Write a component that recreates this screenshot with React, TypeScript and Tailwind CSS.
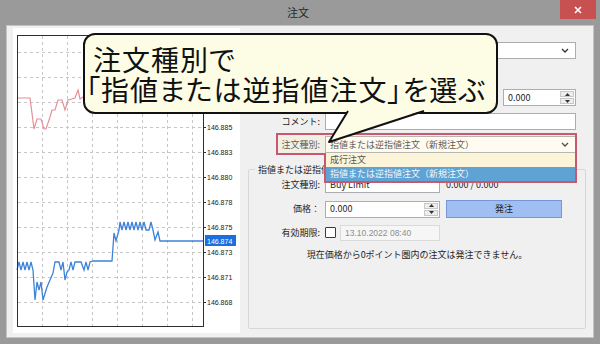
import React from "react";

const redLine =
  "4,70 17,70 21,101 24,91 28,91 31,101 33,101 37,89 39,82 42,82 45,72 49,72 52,82 55,72 59,71 62,70 65,62 67,71 73,67";

const blueLine =
  "4,242 6,234 8,242 10,234 12,242 14,234 16,242 18,234 20,242 22,272 24,254 26,262 28,254 30,272 34,259 37,252 40,245 42,234 46,234 48,242 50,234 52,252 54,244 56,242 58,234 60,242 62,234 64,234 68,234 71,242 73,234 75,242 77,234 80,233 99,233 101,205 103,213 106,202 107,194 109,202 111,194 113,202 115,194 117,202 119,194 121,202 123,194 125,202 127,194 129,202 131,194 133,202 136,202 138,194 140,202 142,212 145,204 147,213 190,213";

const gridX = [29, 54, 79, 104, 129, 154, 179];
const gridY = [24, 49, 74, 99, 124, 149, 174, 199, 224, 249, 274];
const prices = [
  { y: 24, t: "146.893" },
  { y: 49, t: "146.890" },
  { y: 74, t: "146.888" },
  { y: 99, t: "146.885" },
  { y: 124, t: "146.883" },
  { y: 149, t: "146.880" },
  { y: 174, t: "146.878" },
  { y: 199, t: "146.875" },
  { y: 224, t: "146.873" },
  { y: 249, t: "146.871" },
  { y: 274, t: "146.868" },
];

function Chart() {
  return (
    <svg width="227" height="305" className="block">
      {gridX.map((x) => (
        <line key={x} x1={x + 0.5} y1={8} x2={x + 0.5} y2={298} stroke="#c6c6c6" strokeDasharray="3 3" />
      ))}
      {gridY.map((y) => (
        <line key={y} x1={5} y1={y + 0.5} x2={190} y2={y + 0.5} stroke="#c6c6c6" strokeDasharray="3 3" />
      ))}
      <polyline points={redLine} fill="none" stroke="#e68f99" strokeWidth="1.2" />
      <polyline points={blueLine} fill="none" stroke="#3d83d8" strokeWidth="1.3" />
      <rect x="4.5" y="7.5" width="186" height="291" fill="none" stroke="#2e2e2e" />
      {prices.map((p) => (
        <g key={p.t}>
          <line x1={190} y1={p.y + 0.5} x2={193} y2={p.y + 0.5} stroke="#2e2e2e" />
          <text x={194} y={p.y + 3} fontSize="7" fill="#222" fontFamily="Liberation Sans, sans-serif">
            {p.t}
          </text>
        </g>
      ))}
      <rect x="192" y="207" width="31" height="11" fill="#1b6fdf" />
      <text x={194} y={215.5} fontSize="7" fill="#fff" fontFamily="Liberation Sans, sans-serif">
        146.874
      </text>
    </svg>
  );
}

function Chevron() {
  return (
    <svg width="8" height="5" viewBox="0 0 8 5" className="shrink-0">
      <path d="M1 1l3 3 3-3" fill="none" stroke="#333" strokeWidth="1.3" />
    </svg>
  );
}

function SpinButtons() {
  return (
    <div className="flex flex-col gap-[1px] py-[1px] pr-[1px] h-full">
      <div className="w-[14px] flex-1 flex items-center justify-center bg-[#ededed] border border-[#c8c8c8]">
        <svg width="5" height="3" viewBox="0 0 5 3">
          <path d="M0 3h5L2.5 0z" fill="#333" />
        </svg>
      </div>
      <div className="w-[14px] flex-1 flex items-center justify-center bg-[#ededed] border border-[#c8c8c8]">
        <svg width="5" height="3" viewBox="0 0 5 3">
          <path d="M0 0h5L2.5 3z" fill="#333" />
        </svg>
      </div>
    </div>
  );
}

function Field({ children, className }: { children?: React.ReactNode; className: string }) {
  return (
    <div className={`h-[17px] shrink-0 bg-white border border-[#abadb3] flex items-center pl-[4px] ${className}`}>
      {children}
    </div>
  );
}

export default function App() {
  return (
    <div className="w-[600px] h-[344px] bg-[#9a9a9a] flex flex-col overflow-hidden font-['Noto_Sans_CJK_JP',sans-serif] text-[#1e1e1e]">
      {/* title bar */}
      <div className="h-[25px] flex items-start shrink-0">
        <div className="flex-1" />
        <div className="pt-[5px] text-[11px] leading-[15px] text-[#2a2a2a]">注文</div>
        <div className="flex-1 flex justify-end pr-[4px]">
          <div className="w-[36px] h-[19px] bg-[#c75050] flex items-center justify-center">
            <svg width="8" height="8" viewBox="0 0 8 8">
              <path d="M1 1l6 6M7 1L1 7" stroke="#fff" strokeWidth="1.6" />
            </svg>
          </div>
        </div>
      </div>

      {/* client area */}
      <div className="relative flex-1 mx-[6px] mb-[6px] bg-[#f0f0f0] border border-[#c4c4c4] flex gap-[8px] pt-[2px] pl-[6px] pr-[7px] pb-[4px]">
        <div className="w-[227px] bg-white shrink-0">
          <Chart />
        </div>

        <div className="flex-1 min-w-0 flex flex-col pb-[4px] text-[9px] leading-[12px] whitespace-nowrap">
          <div className="flex flex-col pt-[14px] pr-[10px]">
            <div className="flex items-center gap-[5px] h-[17px]">
              <span className="w-[72px] shrink-0 text-right">銘柄:</span>
              <Field className="flex-1 justify-between pr-[6px]">
                <span>USDJPY, US Dollar vs Japanese Yen</span>
                <Chevron />
              </Field>
            </div>
            <div className="flex items-center gap-[5px] mt-[6px] h-[17px]">
              <span className="w-[72px] shrink-0 text-right">数量:</span>
              <Field className="w-[115px] justify-between">
                <span>0.01</span>
                <SpinButtons />
              </Field>
            </div>
            <div className="flex items-center gap-[5px] mt-[7px] h-[17px]">
              <span className="w-[72px] shrink-0 text-right overflow-hidden">決済逆指値(S/L):</span>
              <Field className="w-[115px] justify-between">
                <span>0.000</span>
                <SpinButtons />
              </Field>
              <span className="w-[53px] shrink-0 text-right overflow-hidden">決済指値(T/P):</span>
              <Field className="flex-1 justify-between">
                <span>0.000</span>
                <SpinButtons />
              </Field>
            </div>
            <div className="flex items-center gap-[5px] mt-[7px] h-[17px]">
              <span className="w-[72px] shrink-0 text-right">コメント:</span>
              <Field className="flex-1" />
            </div>
            <div className="flex items-center gap-[5px] mt-[6px] h-[17px]">
              <span className="w-[72px] shrink-0 text-right text-[#444]">注文種別:</span>
              <Field className="flex-1 justify-between pr-[6px] bg-[#fbf8ee] text-[#444]">
                <span>指値または逆指値注文（新規注文）</span>
                <Chevron />
              </Field>
            </div>
          </div>

          <fieldset className="mt-[10px] flex-1 border border-[#d7d7d7] rounded-[2px] min-w-0">
            <legend className="ml-[6px] px-[3px] leading-[13px]">指値または逆指値注文</legend>
            <div className="flex items-center gap-[5px] h-[17px]">
              <span className="w-[71px] shrink-0 text-right">注文種別:</span>
              <Field className="w-[115px]">
                <span>Buy Limit</span>
              </Field>
              <span className="pl-[1px]">0.000 / 0.000</span>
            </div>
            <div className="flex items-center gap-[5px] mt-[7px] h-[18px]">
              <span className="w-[71px] shrink-0 text-right">価格：</span>
              <Field className="w-[115px] justify-between">
                <span>0.000</span>
                <SpinButtons />
              </Field>
              <div className="ml-[1px] w-[116px] h-[18px] bg-[#9fbff2] border border-[#7597d6] flex items-center justify-center">
                発注
              </div>
            </div>
            <div className="flex items-center gap-[5px] mt-[6px] h-[17px]">
              <span className="w-[71px] shrink-0 text-right">有効期限:</span>
              <div className="w-[11px] h-[11px] bg-white border border-[#3a3a3a] rounded-[1px]" />
              <div className="ml-[-1px] w-[100px] h-[16px] bg-[#f6f6f6] border border-[#dadada] flex items-center pl-[4px] text-[#8e8e8e] font-['Liberation_Sans',sans-serif] text-[8.5px]">
                13.10.2022 08:40
              </div>
            </div>
            <div className="mt-[8px] text-center">現在価格から0ポイント圏内の注文は発注できません。</div>
          </fieldset>
        </div>

        {/* annotation: highlighted combo box with opened list */}
        <div className="absolute left-[269px] top-[107px] w-[301px] h-[22px] border-2 border-[#c8586e] bg-[#ffe7a0]/15" />
        <div className="absolute left-[317px] top-[127px] w-[253px] border-x-2 border-b-2 border-[#c8586e] text-[9px] leading-[14px]">
          <div className="h-[14px] bg-[#fcf4d8] pl-[4px] text-[#555]">成行注文</div>
          <div className="h-[14px] bg-[#5ea3d4] pl-[4px] text-[#f2f6fa]">指値または逆指値注文（新規注文）</div>
        </div>

        {/* speech bubble */}
        <div className="absolute left-[76px] top-[7px] w-[415px] h-[81px] rounded-[12px] border-2 border-[#111] bg-[#fdfde6] pl-[8px] pt-[9px] text-[28px] leading-[30px] tracking-[1px] text-[#111] [font-feature-settings:'palt']">
          <div>注文種別で</div>
          <div className="ml-[-7px]">「指値または逆指値注文」を選ぶ</div>
        </div>
        <svg width="110" height="40" className="absolute left-[320px] top-[80px]">
          <polygon points="21,4 97,4 2,36" fill="#fdfde6" />
          <polyline points="21,5 2,36 97,5" fill="none" stroke="#111" strokeWidth="2" strokeLinejoin="round" />
        </svg>
      </div>
    </div>
  );
}
